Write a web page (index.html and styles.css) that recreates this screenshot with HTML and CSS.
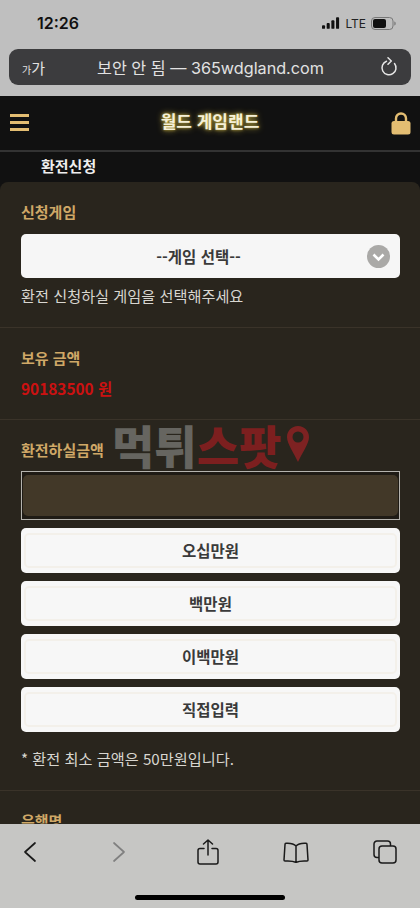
FILE: index.html
```html
<!DOCTYPE html>
<html lang="ko">
<head>
    <meta charset="UTF-8">
    <meta name="viewport" content="width=device-width, initial-scale=1.0">
    <title>환전신청</title>
    <link rel="stylesheet" href="styles.css">
</head>
<body>
<div class="phone">

    <!-- safari top -->
    <div class="topbar">
        <div class="status">
            <span class="time">12:26</span>
            <div class="status-right">
                <svg width="18" height="12" viewBox="0 0 20 13"><rect x="0" y="9" width="3.4" height="4" rx="1" fill="#111"/><rect x="5.2" y="6.5" width="3.4" height="6.5" rx="1" fill="#111"/><rect x="10.4" y="3.5" width="3.4" height="9.5" rx="1" fill="#111"/><rect x="15.6" y="0" width="3.4" height="13" rx="1" fill="#111"/></svg>
                <span class="lte">LTE</span>
                <svg width="25" height="13" viewBox="0 0 25 13"><rect x="0.5" y="0.5" width="21.5" height="12" rx="3.5" fill="none" stroke="#777"/><rect x="2" y="2" width="13" height="9" rx="2" fill="#111"/><path d="M23.3 4.5c1 .4 1.4 1.1 1.4 2s-.4 1.600-1.400 2z" fill="#777"/></svg>
            </div>
        </div>
        <div class="urlbar">
            <span class="aa"><small>가</small>가</span>
            <span class="url">보안 안 됨 — 365wdgland.com</span>
            <svg class="reload" width="18" height="20" viewBox="0 0 18 20" fill="none" stroke="#e6e6e6" stroke-width="1.5" stroke-linecap="round" stroke-linejoin="round"><path d="M6.500 4.300A7 7 0 1 0 14.500 6.500"/><path d="M8 0.800 11.300 4 8 7.200"/></svg>
        </div>
    </div>

    <div class="site">
        <div class="site-header">
            <div class="burger"><i></i><i></i><i></i></div>
            <div class="site-title">월드 게임랜드</div>
            <svg class="lock" width="20" height="23" viewBox="0 0 20 23"><path d="M5 10V6.500a5 5 0 0 1 10 0V10" fill="none" stroke="#e3bd72" stroke-width="2.400"/><rect x="0.500" y="9" width="19" height="13.500" rx="2.500" fill="#e3bd72"/></svg>
        </div>
        <div class="subheader">환전신청</div>

        <div class="panel">
            <section class="group">
                <div class="label">신청게임</div>
                <div class="select">
                    <span>--게임 선택--</span>
                    <svg class="select-arrow" width="23" height="23" viewBox="0 0 23 23"><circle cx="11.500" cy="11.500" r="11.500" fill="#aaa9a7"/><path d="M6.500 9.500 11.500 14.500 16.500 9.500" fill="none" stroke="#fff" stroke-width="2.600"/></svg>
                </div>
                <p class="help">환전 신청하실 게임을 선택해주세요</p>
            </section>

            <section class="group">
                <div class="label">보유 금액</div>
                <div class="amount">90183500 원</div>
            </section>

            <section class="group">
                <div class="label">환전하실금액</div>
                <div class="input-box"><div class="input-inner"></div></div>
                <div class="btn-list">
                    <div class="btn"><span>오십만원</span></div>
                    <div class="btn"><span>백만원</span></div>
                    <div class="btn"><span>이백만원</span></div>
                    <div class="btn"><span>직접입력</span></div>
                </div>
                <p class="help note">* 환전 최소 금액은 50만원입니다.</p>
            </section>

            <section class="group">
                <div class="label">은행명</div>
            </section>
        </div>

        <!-- watermark on top of the shot -->
        <div class="watermark">
            <span class="wm-gray">먹튀</span><span class="wm-red">스팟</span>
            <svg width="24" height="38" viewBox="0 0 24 38"><path d="M12 1C5.500 1 1 6 1 12c0 7 7 16 11 25 4-9 11-18 11-25C23 6 18.500 1 12 1z" fill="#7d2222"/><circle cx="12" cy="12" r="5.500" fill="#29251d"/></svg>
        </div>
    </div>

    <!-- safari bottom -->
    <div class="toolbar">
        <div class="tools">
            <svg width="14" height="22" viewBox="0 0 14 22" fill="none" stroke="#1a1a1a" stroke-width="1.700" stroke-linecap="round" stroke-linejoin="round"><path d="M12 2 2 11l10 9"/></svg>
            <svg width="14" height="22" viewBox="0 0 14 22" fill="none" stroke="#808080" stroke-width="1.700" stroke-linecap="round" stroke-linejoin="round"><path d="M2 2l10 9-10 9"/></svg>
            <svg width="22" height="26" viewBox="0 0 22 26" fill="none" stroke="#1a1a1a" stroke-width="1.500" stroke-linecap="round" stroke-linejoin="round"><path d="M7 9.500H3a2 2 0 0 0-2 2V23a2 2 0 0 0 2 2h16a2 2 0 0 0 2-2V11.500a2 2 0 0 0-2-2h-4"/><path d="M11 16V1M6.500 5 11 1l4.500 4"/></svg>
            <svg width="26" height="21" viewBox="0 0 26 21" fill="none" stroke="#1a1a1a" stroke-width="1.500" stroke-linecap="round" stroke-linejoin="round"><path d="M13 4C11 1.800 8 1 3 1.300 2.200 1.400 2 1.800 2 2.500L1 18c0 .7.300 1 1 1 5-.3 8.500 0 11 1.500 2.500-1.500 6-1.800 11-1.500.7 0 1-.3 1-1L24 2.500c0-.7-.2-1.100-1-1.200C18 1 15 1.800 13 4zM13 4v16.500"/></svg>
            <svg width="24" height="24" viewBox="0 0 24 24" fill="none" stroke="#1a1a1a" stroke-width="1.500" stroke-linejoin="round"><path d="M6 17.500H4a3 3 0 0 1-3-3V4a3 3 0 0 1 3-3h10.500a3 3 0 0 1 3 3v2"/><rect x="6" y="6" width="17" height="17" rx="3"/></svg>
        </div>
        <div class="home-bar"></div>
    </div>

</div>
</body>
</html>
```

FILE: styles.css
```css
*{
    box-sizing: border-box;
}
body{
    margin: 0;
    font-family: "Noto Sans CJK KR", "Noto Sans", sans-serif;
    background-color: #29251d;
}
.phone{
    width: 420px;
    height: 908px;
    display: flex;
    flex-direction: column;
    overflow: hidden;
}

/* top of browser */
.topbar{
    height: 96px;
    background-color: #bfbfbf;
    padding: 0 9px;
    flex-shrink: 0;
}
.status{
    height: 49px;
    padding: 8px 15px 0 28px;
    display: flex;
    justify-content: space-between;
    align-items: flex-start;
}
.time{
    font-family: "Inter", sans-serif;
    font-size: 16px;
    font-weight: 600;
    color: #111;
    line-height: 30px;
}
.status-right{
    display: flex;
    align-items: center;
    gap: 5px;
    height: 30px;
}
.lte{
    font-family: "Inter", sans-serif;
    font-size: 12px;
    color: #222;
}
.urlbar{
    height: 36px;
    background-color: #3c3c3e;
    border-radius: 9px;
    display: flex;
    align-items: center;
    padding: 0 13px 0 13px;
    position: relative;
    color: #e2e2e2;
}
.aa{
    font-size: 15px;
    width: 25px;
}
.aa small{
    font-size: 10px;
}
.url{
    flex: 1;
    padding-left: 50px;
    font-size: 16.200px;
    white-space: nowrap;
    font-family: "Inter", "Noto Sans CJK KR", sans-serif;
}

/* site */
.site{
    flex: 1;
    position: relative;
    overflow: hidden;
    background-color: #111;
}
.site-header{
    height: 56px;
    padding: 0 9px 0 10px;
    display: flex;
    align-items: center;
    justify-content: space-between;
    border-bottom: 2px solid #333;
}
.burger{
    width: 19px;
    margin-bottom: 2px;
    display: flex;
    flex-direction: column;
    gap: 4px;
}
.burger i{
    display: block;
    height: 3px;
    background-color: #e3bd72;
}
.site-title{
    font-size: 17px;
    font-weight: 700;
    color: #f5f0d8;
    margin-bottom: 5px;
    text-shadow: 0 0 6px #b9a53f, 0 0 3px #b9a53f;
}
.subheader{
    height: 30px;
    padding-left: 41px;
    font-size: 15px;
    font-weight: 700;
    color: #eee;
    line-height: 27px;
}
.panel{
    background-color: #29251d;
    border-radius: 8px 8px 0 0;
    height: 700px;
}
.group{
    padding: 20px 20px 21px 21px;
    border-bottom: 1px solid #3a3329;
}
.label{
    font-size: 15px;
    font-weight: 700;
    color: #cfa867;
    line-height: 20px;
}
.select{
    margin-top: 12px;
    height: 44px;
    background-color: #f6f6f6;
    border-radius: 5px;
    display: flex;
    align-items: center;
    justify-content: center;
    font-size: 15.500px;
    font-weight: 700;
    color: #3a3a3a;
    position: relative;
    padding-right: 24px;
}
.select-arrow{
    position: absolute;
    right: 10px;
    top: 11px;
}
.help{
    margin: 7px 0 1px;
    font-size: 15.200px;
    color: #d8d6d0;
    line-height: 20px;
}
.amount{
    margin-top: 10px;
    font-size: 15.400px;
    font-weight: 700;
    color: #cc1111;
    line-height: 20px;
}
.input-box{
    margin-top: 11px;
    height: 49px;
    border: 1px solid #b5b3ae;
    background-color: #1f1b15;
    padding: 3px 1px;
}
.input-inner{
    height: 100%;
    background-color: #423828;
    border-radius: 5px;
}
.btn-list{
    margin-top: 8px;
    display: flex;
    flex-direction: column;
    gap: 8px;
}
.btn{
    height: 45px;
    background-color: #f7f7f7;
    border-radius: 5px;
    padding: 5px 3px;
}
.btn span{
    display: flex;
    height: 100%;
    align-items: center;
    justify-content: center;
    padding-bottom: 2px;
    border: 2px solid #f3f0ea;
    border-radius: 5px;
    font-size: 15.500px;
    font-weight: 700;
    color: #3a3a3a;
}
.note{
    margin-top: 16px;
    font-size: 15.200px;
}

.watermark{
    position: absolute;
    left: 112px;
    top: 327px;
    display: flex;
    align-items: center;
    height: 42px;
    font-size: 46px;
    font-weight: 900;
    line-height: 42px;
}
.wm-gray{
    color: #666560;
}
.wm-red{
    color: #7c1f1f;
    margin-right: 5px;
}

/* bottom of browser */
.toolbar{
    height: 84px;
    background-color: #c6c6c4;
    flex-shrink: 0;
    position: relative;
}
.tools{
    height: 56px;
    display: grid;
    grid-template-columns: repeat(5, 60px);
    column-gap: 28.750px;
    justify-items: center;
    align-items: center;
}
.home-bar{
    width: 150px;
    height: 5px;
    background-color: #000;
    border-radius: 3px;
    margin: 15px auto 0;
}
```
